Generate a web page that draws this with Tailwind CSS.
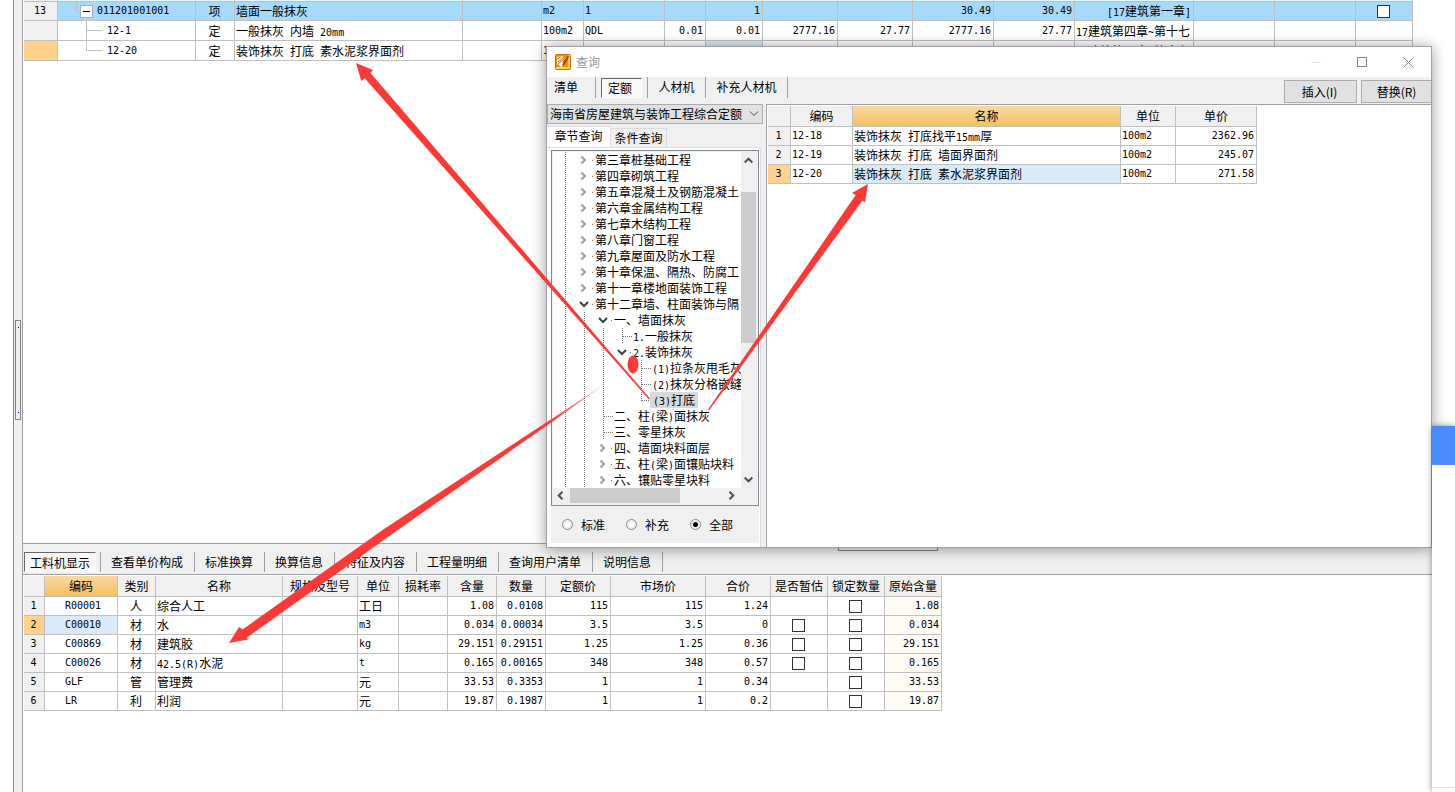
<!DOCTYPE html>
<html lang="zh-CN">
<head>
<meta charset="utf-8">
<title>查询</title>
<script src="https://cdn.jsdelivr.net/npm/@tailwindcss/browser@4"></script>
</head>
<body class="relative flex h-screen overflow-hidden bg-white text-[12px] leading-4 text-black [font-family:'Noto_Sans_CJK_SC',sans-serif] [&_.n]:text-[10px] [&_.n]:[font-family:'DejaVu_Sans_Mono','Noto_Sans_CJK_SC',monospace] [&_.n]:whitespace-pre [&_span.n]:leading-none">

<svg class="hidden" aria-hidden="true">
  <symbol id="v" viewBox="0 0 19 16"><path d="M9.5 0V16" stroke="#777" stroke-dasharray="1 1" fill="none"/></symbol>
  <symbol id="t" viewBox="0 0 19 16"><path d="M9.5 0V16M10 8.500H19" stroke="#777" stroke-dasharray="1 1" fill="none"/></symbol>
  <symbol id="l" viewBox="0 0 19 16"><path d="M9.500 0V9M10 8.500H19" stroke="#777" stroke-dasharray="1 1" fill="none"/></symbol>
  <symbol id="r" viewBox="0 0 19 16"><path d="M6.500 4.500L10 8L6.500 11.500" stroke="#a0a0a0" stroke-width="2" fill="none"/><path d="M17 8.500H18" stroke="#777"/></symbol>
  <symbol id="d" viewBox="0 0 19 16"><path d="M5 6L9 10L13 6" stroke="#404040" stroke-width="2" fill="none"/><path d="M17 8.500H18" stroke="#777"/></symbol>
</svg>

<div class="w-[14px] shrink-0 border-r border-[#828790]"></div>
<div class="w-2 shrink-0 bg-[#f0f0f0]">
  <div class="mt-[320px] ml-px flex h-[100px] w-[6px] flex-col items-center justify-between border border-[#828282] bg-[#f0f0f0] py-[6px]">
    <span class="size-px bg-[#000080]"></span><span class="size-px bg-[#000080]"></span>
  </div>
</div>

<main class="flex min-w-0 flex-1 flex-col border-l border-[#a0a0a0]">
  <section class="h-[544px] shrink-0 overflow-hidden border-b border-[#a0a0a0] pl-px">
    <table class="w-[1389px] table-fixed border-separate border-spacing-0 [&_td]:overflow-hidden [&_td]:border-r [&_td]:border-b [&_td]:border-[#c0c0c0] [&_td]:py-0 [&_td]:pr-[2px] [&_td]:pl-px [&_td]:leading-[18px] [&_td]:whitespace-nowrap">
      <colgroup><col class="w-[34px]"><col class="w-[138px]"><col class="w-[39px]"><col class="w-[228px]"><col class="w-[79px]"><col class="w-[42px]"><col class="w-[81px]"><col class="w-[41px]"><col class="w-[57px]"><col class="w-[75px]"><col class="w-[75px]"><col class="w-[81px]"><col class="w-[81px]"><col class="w-[119px]"><col class="w-[81px]"><col class="w-[81px]"><col class="w-[57px]"></colgroup>
      <tbody>
        <tr class="h-[2px] bg-[#e6f7ff]"><td class="bg-[#f0f0f0]"></td><td></td><td></td><td></td><td></td><td></td><td></td><td></td><td></td><td></td><td></td><td></td><td></td><td></td><td></td><td></td><td></td></tr>
        <tr class="h-[19px] bg-[#a6dafb]">
          <td class="n bg-[#f0f0f0] text-center">13</td>
          <td><div class="-ml-px flex h-[18px] items-center"><svg class="mr-1 h-[18px] w-[35px]" viewBox="0 0 35 18" fill="none"><path d="M18.500 0V9.500H22" stroke="#c0c0c0"/><rect x="22.500" y="3.500" width="12" height="12" fill="#fff" stroke="#b0b0b0"/><path d="M25 9.500H32" stroke="#000"/></svg><span class="n">011201001001</span></div></td>
          <td class="text-center">项</td><td>墙面一般抹灰</td><td></td><td class="n">m2</td><td class="n">1</td><td></td><td class="n text-right">1</td><td></td><td></td><td class="n text-right">30.49</td><td class="n text-right">30.49</td><td class="text-right"><span class="n">[17</span>建筑第一章<span class="n">]</span></td><td></td><td></td>
          <td><input type="checkbox" aria-label="011201001001" class="mx-auto block size-[13px] appearance-none border border-[#333] bg-white"></td>
        </tr>
        <tr class="h-5">
          <td class="bg-[#f0f0f0]"></td>
          <td><div class="-ml-px flex h-[19px] items-center"><svg class="mr-[5px] h-[19px] w-11" viewBox="0 0 44 19" fill="none"><path d="M28.500 0V19M28.500 9.500H44" stroke="#c0c0c0"/></svg><span class="n">12-1</span></div></td>
          <td class="text-center">定</td><td>一般抹灰<span class="n"> </span>内墙<span class="n"> 20mm</span></td><td></td><td class="n">100m2</td><td class="n">QDL</td><td class="n text-right">0.01</td><td class="n text-right">0.01</td><td class="n text-right">2777.16</td><td class="n text-right">27.77</td><td class="n text-right">2777.16</td><td class="n text-right">27.77</td><td><span class="n">17</span>建筑第四章<span class="n">~</span>第十七</td><td></td><td></td><td></td>
        </tr>
        <tr class="h-5">
          <td class="bg-[#ffd28c]"></td>
          <td><div class="-ml-px flex h-[19px] items-center"><svg class="mr-[5px] h-[19px] w-11" viewBox="0 0 44 19" fill="none"><path d="M28.500 0V9.500H44" stroke="#c0c0c0"/></svg><span class="n">12-20</span></div></td>
          <td class="text-center">定</td><td>装饰抹灰<span class="n"> </span>打底<span class="n"> </span>素水泥浆界面剂</td><td></td><td class="n">100m2</td><td class="n">QDL</td><td class="n text-right">0.01</td><td class="n bg-[#d9ebf9] text-right">0.01</td><td class="n text-right">271.58</td><td class="n text-right">2.72</td><td class="n text-right">271.58</td><td class="n text-right">2.72</td><td><span class="n">17</span>建筑第四章<span class="n">~</span>第十七</td><td></td><td></td><td></td>
        </tr>
      </tbody>
    </table>
  </section>

  <section class="h-[31px] shrink-0 border-b border-[#a0a0a8] bg-[#f0f0f0]">
    <div class="ml-[815px] flex h-[7px] w-[100px] items-center justify-between border border-[#828282] px-[6px]"><span class="size-px bg-[#000080]"></span><span class="size-px bg-[#000080]"></span></div>
    <nav class="mt-px flex h-5 [&_button]:whitespace-nowrap">
      <button class="ml-px w-[72px] border border-t-[#696969] border-r-white border-b-white border-l-[#696969] bg-[#f8f8f8] pt-px">工料机显示</button>
      <span class="w-[5px] border-r border-[#a0a0a0]"></span>
      <button class="border-r border-[#a0a0a0] pr-[11px] pl-[10px]">查看单价构成</button>
      <button class="border-r border-[#a0a0a0] pr-[11px] pl-[10px]">标准换算</button>
      <button class="border-r border-[#a0a0a0] pr-[11px] pl-[10px]">换算信息</button>
      <button class="border-r border-[#a0a0a0] pr-[11px] pl-[10px]">特征及内容</button>
      <button class="border-r border-[#a0a0a0] pr-[11px] pl-[10px]">工程量明细</button>
      <button class="border-r border-[#a0a0a0] pr-[11px] pl-[10px]">查询用户清单</button>
      <button class="border-r border-[#a0a0a0] pr-[11px] pl-[10px]">说明信息</button>
    </nav>
  </section>

  <section class="min-h-0 flex-1 overflow-hidden pt-px pl-px">
    <table class="w-[918px] table-fixed border-separate border-spacing-0 [&_td]:overflow-hidden [&_td]:border-r [&_td]:border-b [&_td]:border-[#c0c0c0] [&_td]:py-0 [&_td]:pr-[2px] [&_td]:pl-px [&_td]:leading-[18px] [&_td]:whitespace-nowrap [&_th]:h-[21px] [&_th]:border-r [&_th]:border-b [&_th]:border-[#c0c0c0] [&_th]:bg-[#f0f0f0] [&_th]:p-0 [&_th]:font-normal [&_th]:whitespace-nowrap [&_input]:mx-auto [&_input]:block [&_input]:size-[13px] [&_input]:appearance-none [&_input]:border [&_input]:border-[#333] [&_tbody_tr]:h-[19px] [&_td:first-child]:text-center [&_td:last-child]:bg-[#fffbf5] [&_td:nth-child(2)]:pl-5 [&_td:nth-child(3)]:text-center">
      <colgroup><col class="w-[21px]"><col class="w-[73px]"><col class="w-[38px]"><col class="w-[127px]"><col class="w-[75px]"><col class="w-[41px]"><col class="w-[49px]"><col class="w-[49px]"><col class="w-[49px]"><col class="w-[65px]"><col class="w-[95px]"><col class="w-[65px]"><col class="w-[57px]"><col class="w-[57px]"><col class="w-[57px]"></colgroup>
      <thead><tr><th></th><th class="bg-linear-to-b from-[#f9d8a0] to-[#f2c15f]">编码</th><th>类别</th><th>名称</th><th>规格及型号</th><th>单位</th><th>损耗率</th><th>含量</th><th>数量</th><th>定额价</th><th>市场价</th><th>合价</th><th>是否暂估</th><th>锁定数量</th><th>原始含量</th></tr></thead>
      <tbody>
        <tr><td class="n bg-[#f0f0f0]">1</td><td class="n">R00001</td><td>人</td><td>综合人工</td><td></td><td>工日</td><td></td><td class="n text-right">1.08</td><td class="n text-right">0.0108</td><td class="n text-right">115</td><td class="n text-right">115</td><td class="n text-right">1.24</td><td></td><td><input type="checkbox" aria-label="锁定数量 1"></td><td class="n text-right">1.08</td></tr>
        <tr><td class="n bg-[#ffd28c]">2</td><td class="n bg-[#d9ebf9]">C00010</td><td>材</td><td>水</td><td></td><td class="n">m3</td><td></td><td class="n text-right">0.034</td><td class="n text-right">0.00034</td><td class="n text-right">3.5</td><td class="n text-right">3.5</td><td class="n text-right">0</td><td><input type="checkbox" aria-label="是否暂估 2"></td><td><input type="checkbox" aria-label="锁定数量 2"></td><td class="n text-right">0.034</td></tr>
        <tr><td class="n bg-[#f0f0f0]">3</td><td class="n">C00869</td><td>材</td><td>建筑胶</td><td></td><td class="n">kg</td><td></td><td class="n text-right">29.151</td><td class="n text-right">0.29151</td><td class="n text-right">1.25</td><td class="n text-right">1.25</td><td class="n text-right">0.36</td><td><input type="checkbox" aria-label="是否暂估 3"></td><td><input type="checkbox" aria-label="锁定数量 3"></td><td class="n text-right">29.151</td></tr>
        <tr><td class="n bg-[#f0f0f0]">4</td><td class="n">C00026</td><td>材</td><td><span class="n">42.5(R)</span>水泥</td><td></td><td class="n">t</td><td></td><td class="n text-right">0.165</td><td class="n text-right">0.00165</td><td class="n text-right">348</td><td class="n text-right">348</td><td class="n text-right">0.57</td><td><input type="checkbox" aria-label="是否暂估 4"></td><td><input type="checkbox" aria-label="锁定数量 4"></td><td class="n text-right">0.165</td></tr>
        <tr><td class="n bg-[#f0f0f0]">5</td><td class="n">GLF</td><td>管</td><td>管理费</td><td></td><td>元</td><td></td><td class="n text-right">33.53</td><td class="n text-right">0.3353</td><td class="n text-right">1</td><td class="n text-right">1</td><td class="n text-right">0.34</td><td></td><td><input type="checkbox" aria-label="锁定数量 5"></td><td class="n text-right">33.53</td></tr>
        <tr><td class="n bg-[#f0f0f0]">6</td><td class="n">LR</td><td>利</td><td>利润</td><td></td><td>元</td><td></td><td class="n text-right">19.87</td><td class="n text-right">0.1987</td><td class="n text-right">1</td><td class="n text-right">1</td><td class="n text-right">0.2</td><td></td><td><input type="checkbox" aria-label="锁定数量 6"></td><td class="n text-right">19.87</td></tr>
      </tbody>
    </table>
  </section>
</main>

<!-- query dialog -->
<div role="dialog" aria-labelledby="dlg" class="absolute top-[46px] left-[546px] flex h-[502px] w-[886px] flex-col border border-[#a0a0a6] bg-[#f0f0f0] shadow-[0_1px_14px_rgba(0,0,0,0.4)]">
  <header class="flex h-[30px] shrink-0 items-center bg-white pl-2">
    <svg class="size-4" viewBox="0 0 16 16"><rect x=".5" y=".5" width="15" height="15" rx="1" fill="#e8930c" stroke="#c4740a"/><path d="M13 1H15V15H1V13H13Z" fill="#ffd34d"/><path d="M2 3L7 2L9 5L6 12L2 10Z" fill="#fff3cf"/><path d="M2 5L6 3M3 8L8 4M3 10L9 5M6 12L10 6" stroke="#a85200" stroke-width=".8"/><path d="M13 1L9 8L7 13L10 10L14 3Z" fill="#a3400c"/><path d="M4 12L8 8L7 13Z" fill="#fff"/></svg>
    <h1 id="dlg" class="ml-[5px] flex-1 text-[#999]">查询</h1>
    <button aria-label="最小化" class="grid w-[46px] place-items-center"><svg class="size-[11px]" viewBox="0 0 11 11"><path d="M0 5.500H10" stroke="#e4e4e4"/></svg></button>
    <button aria-label="最大化" class="grid w-[46px] place-items-center"><svg class="size-[11px]" viewBox="0 0 11 11"><rect x=".5" y=".5" width="9" height="9" fill="none" stroke="#888"/></svg></button>
    <button aria-label="关闭" class="grid w-[46px] place-items-center"><svg class="size-[11px]" viewBox="0 0 11 11"><path d="M.5.500L10.500 10.500M10.500.500L.5 10.500" stroke="#888"/></svg></button>
  </header>
  <div class="flex h-[27px] shrink-0 items-start overflow-hidden [&_button]:whitespace-nowrap">
    <button class="h-[21px] w-[49px] border-r border-[#a0a0a0] pr-[10px] pb-[2px]">清单</button>
    <button class="mt-px ml-[5px] h-5 w-[41px] border border-t-[#696969] border-r-white border-b-white border-l-[#696969] bg-[#f8f8f8] pr-[3px]">定额</button>
    <span class="h-[21px] w-[6px] border-r border-[#a0a0a0]"></span>
    <button class="h-[21px] w-[58px] border-r border-[#a0a0a0] pb-[2px]">人材机</button>
    <button class="h-[21px] w-[82px] border-r border-[#a0a0a0] pb-[2px]">补充人材机</button>
    <button class="mt-[3px] ml-auto h-[23px] w-[73px] shrink-0 border border-[#adadad] bg-[#e1e1e1] pr-[2px]">插入(I)</button>
    <button class="mt-[3px] -mr-px ml-1 h-[23px] w-[71px] shrink-0 border border-[#adadad] bg-[#e1e1e1]">替换(R)</button>
  </div>
  <div class="flex min-h-0 flex-1">
    <aside class="flex w-[219px] shrink-0 flex-col">
      <div class="relative h-5 w-[216px]">
        <select aria-label="定额库" class="block h-5 w-full appearance-none overflow-hidden border border-[#adadad] bg-[#e1e1e1] pl-[2px] leading-4"><option>海南省房屋建筑与装饰工程综合定额</option></select>
        <svg class="pointer-events-none absolute top-[7px] right-1 h-[6px] w-[10px]" viewBox="0 0 10 6"><path d="M1 .5L5 4.500L9 .5" stroke="#505050" fill="none"/></svg>
      </div>
      <div class="mt-[2px] flex h-[21px] items-end">
        <button class="h-[21px] w-16 border-t border-r border-[#dcdcdc] bg-white pb-[3px]">章节查询</button>
        <button class="h-[19px] w-14 border-t border-r border-[#dcdcdc] whitespace-nowrap">条件查询</button>
      </div>
      <div class="flex w-[214px] flex-1 flex-col border-t border-r border-[#dcdcdc] bg-white pr-px pb-1 pl-1">
        <div class="mt-[2px] flex h-[356px] w-[208px] flex-col border border-[#828790] bg-[#f0f0f0] px-px pt-px">
          <div class="flex min-h-0 flex-1">
            <ul class="w-[188px] overflow-hidden bg-white pl-[3px] [&_li]:flex [&_li]:h-4 [&_li]:items-center [&_li]:whitespace-nowrap [&_svg]:h-4 [&_svg]:w-[19px] [&_svg]:shrink-0 [&_b]:w-[19px] [&_b]:shrink-0 [&_p]:ml-px">
              <li><svg><use href="#v"/></svg><svg><use href="#r"/></svg><p>第三章桩基础工程</p></li>
              <li><svg><use href="#v"/></svg><svg><use href="#r"/></svg><p>第四章砌筑工程</p></li>
              <li><svg><use href="#v"/></svg><svg><use href="#r"/></svg><p>第五章混凝土及钢筋混凝土</p></li>
              <li><svg><use href="#v"/></svg><svg><use href="#r"/></svg><p>第六章金属结构工程</p></li>
              <li><svg><use href="#v"/></svg><svg><use href="#r"/></svg><p>第七章木结构工程</p></li>
              <li><svg><use href="#v"/></svg><svg><use href="#r"/></svg><p>第八章门窗工程</p></li>
              <li><svg><use href="#v"/></svg><svg><use href="#r"/></svg><p>第九章屋面及防水工程</p></li>
              <li><svg><use href="#v"/></svg><svg><use href="#r"/></svg><p>第十章保温、隔热、防腐工</p></li>
              <li><svg><use href="#v"/></svg><svg><use href="#r"/></svg><p>第十一章楼地面装饰工程</p></li>
              <li><svg><use href="#v"/></svg><svg><use href="#d"/></svg><p>第十二章墙、柱面装饰与隔</p></li>
              <li><svg><use href="#v"/></svg><svg><use href="#v"/></svg><svg><use href="#d"/></svg><p>一、墙面抹灰</p></li>
              <li><svg><use href="#v"/></svg><svg><use href="#v"/></svg><svg><use href="#v"/></svg><svg><use href="#t"/></svg><p><span class="n">1.</span>一般抹灰</p></li>
              <li><svg><use href="#v"/></svg><svg><use href="#v"/></svg><svg><use href="#v"/></svg><svg><use href="#d"/></svg><p><span class="n">2.</span>装饰抹灰</p></li>
              <li><svg><use href="#v"/></svg><svg><use href="#v"/></svg><svg><use href="#v"/></svg><b></b><svg><use href="#t"/></svg><p><span class="n">(1)</span>拉条灰甩毛灰</p></li>
              <li><svg><use href="#v"/></svg><svg><use href="#v"/></svg><svg><use href="#v"/></svg><b></b><svg><use href="#t"/></svg><p><span class="n">(2)</span>抹灰分格嵌缝</p></li>
              <li><svg><use href="#v"/></svg><svg><use href="#v"/></svg><svg><use href="#v"/></svg><b></b><svg><use href="#l"/></svg><p class="-ml-px! bg-[#d9d9d9] px-[3px]"><span class="n">(3)</span>打底</p></li>
              <li><svg><use href="#v"/></svg><svg><use href="#v"/></svg><svg><use href="#t"/></svg><p>二、柱<span class="n">(</span>梁<span class="n">)</span>面抹灰</p></li>
              <li><svg><use href="#v"/></svg><svg><use href="#v"/></svg><svg><use href="#t"/></svg><p>三、零星抹灰</p></li>
              <li><svg><use href="#v"/></svg><svg><use href="#v"/></svg><svg><use href="#r"/></svg><p>四、墙面块料面层</p></li>
              <li><svg><use href="#v"/></svg><svg><use href="#v"/></svg><svg><use href="#r"/></svg><p>五、柱<span class="n">(</span>梁<span class="n">)</span>面镶贴块料</p></li>
              <li><svg><use href="#v"/></svg><svg><use href="#v"/></svg><svg><use href="#r"/></svg><p>六、镶贴零星块料</p></li>
            </ul>
            <div class="flex w-[15px] flex-col items-center">
              <svg class="mt-[5px] h-[7px] w-[9px]" viewBox="0 0 9 7"><path d="M.7 5.500L4.500 1.700L8.300 5.500" stroke="#505050" stroke-width="2" fill="none"/></svg>
              <div class="mt-7 h-[151px] w-full bg-[#cdcdcd]"></div>
              <svg class="mt-auto mb-[5px] h-[7px] w-[9px]" viewBox="0 0 9 7"><path d="M.7 1.500L4.500 5.300L8.300 1.500" stroke="#505050" stroke-width="2" fill="none"/></svg>
            </div>
          </div>
          <div class="flex h-[17px] items-start pl-1">
            <svg class="mt-[3px] h-[9px] w-[7px]" viewBox="0 0 7 9"><path d="M5.500.700L1.700 4.500L5.500 8.300" stroke="#505050" stroke-width="2" fill="none"/></svg>
            <div class="ml-[6px] h-[15px] w-[110px] bg-[#cdcdcd]"></div>
            <svg class="mt-[3px] ml-12 h-[9px] w-[7px]" viewBox="0 0 7 9"><path d="M1.500.700L5.300 4.500L1.500 8.300" stroke="#505050" stroke-width="2" fill="none"/></svg>
          </div>
        </div>
        <div class="flex h-[37px] w-[208px] items-center gap-4 bg-[#f0f0f0] pl-[11px] [&_input]:size-[11px] [&_input]:appearance-none [&_input]:rounded-full [&_input]:border [&_input]:border-[#8a8a8a] [&_input]:bg-white [&_input]:bg-clip-content [&_input]:p-[2px] [&_input:checked]:bg-black [&_label]:flex [&_label]:w-12 [&_label]:items-center [&_label]:gap-2 [&_label]:whitespace-nowrap">
          <label><input type="radio" name="scope">标准</label>
          <label><input type="radio" name="scope">补充</label>
          <label><input type="radio" name="scope" checked>全部</label>
        </div>
      </div>
    </aside>
    <div class="min-w-0 flex-1 border-t border-l border-[#a0a0a6] bg-white pt-px pl-px">
      <table class="w-[489px] table-fixed border-separate border-spacing-0 [&_td]:overflow-hidden [&_td]:border-r [&_td]:border-b [&_td]:border-[#c0c0c0] [&_td]:py-0 [&_td]:pr-[2px] [&_td]:pl-px [&_td]:leading-[18px] [&_td]:whitespace-nowrap [&_th]:h-[21px] [&_th]:border-r [&_th]:border-b [&_th]:border-[#c0c0c0] [&_th]:bg-[#f0f0f0] [&_th]:p-0 [&_th]:font-normal [&_tbody_tr]:h-[19px] [&_td:first-child]:text-center">
        <colgroup><col class="w-[23px]"><col class="w-[62px]"><col class="w-[268px]"><col class="w-[55px]"><col class="w-[81px]"></colgroup>
        <thead><tr><th></th><th>编码</th><th class="bg-linear-to-b from-[#f9d8a0] to-[#f2c15f]">名称</th><th>单位</th><th>单价</th></tr></thead>
        <tbody>
          <tr><td class="n bg-[#f0f0f0]">1</td><td class="n">12-18</td><td>装饰抹灰<span class="n"> </span>打底找平<span class="n">15mm</span>厚</td><td class="n">100m2</td><td class="n text-right">2362.96</td></tr>
          <tr><td class="n bg-[#f0f0f0]">2</td><td class="n">12-19</td><td>装饰抹灰<span class="n"> </span>打底<span class="n"> </span>墙面界面剂</td><td class="n">100m2</td><td class="n text-right">245.07</td></tr>
          <tr><td class="n bg-[#ffd28c]">3</td><td class="n">12-20</td><td class="bg-[#d9ebf9]">装饰抹灰<span class="n"> </span>打底<span class="n"> </span>素水泥浆界面剂</td><td class="n">100m2</td><td class="n text-right">271.58</td></tr>
        </tbody>
      </table>
    </div>
  </div>
</div>

<!-- side panel peeking in from the right edge -->
<div class="absolute top-[426px] right-0 bottom-0 flex w-[23px] flex-col bg-white shadow-[0_0_6px_rgba(0,0,0,0.45)]">
  <div class="h-[39px] bg-[#4a8cff]"></div>
  <div class="mt-auto h-[5px] border-t border-[#e5e5e5]"></div>
</div>

<!-- annotation arrows -->
<svg class="pointer-events-none absolute top-0 left-0 h-[792px] w-[1455px]" viewBox="0 0 1455 792" fill="#fb3a38" aria-hidden="true">
  <defs><linearGradient id="fade" gradientUnits="userSpaceOnUse" x1="550" y1="421" x2="604" y2="384"><stop stop-color="#fb3a38"/><stop offset="1" stop-color="#fb3a38" stop-opacity=".3"/></linearGradient></defs>
  <path d="M356 63L373 70L370.500 73L650 398.500L649 399.500L364.700 78.300L361.300 81Z"/>
  <path d="M868 184L865 202.500L862.500 200.500L709 410.500L708 409.500L855.700 195L852 193Z"/>
  <path fill="url(#fade)" d="M229 643L239 627L242.500 629.500L384 529L550 420L604 384.500L552 422L397 530.500L247 637.500L248 639.500Z"/>
  <ellipse cx="633" cy="364.500" rx="5.500" ry="9"/>
</svg>
</body>
</html>
